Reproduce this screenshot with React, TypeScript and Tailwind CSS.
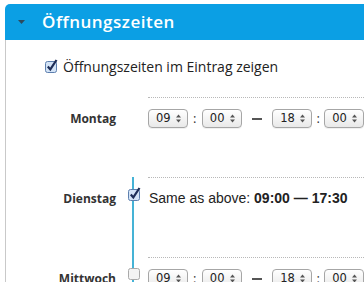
import React from 'react';

const Caret = () => (
  <svg width="7" height="4" viewBox="0 0 7 4" className="block">
    <path d="M0 0h7L3.5 4z" fill="#2c4a5e" />
  </svg>
);

const Arrows = () => (
  <svg width="5" height="9" viewBox="0 0 5 9" className="block">
    <path d="M0 3.5L2.5 0.5L5 3.5z" fill="#555" />
    <path d="M0 5.5L2.5 8.5L5 5.5z" fill="#555" />
  </svg>
);

const Box: React.FC<{ checked?: boolean }> = ({ checked }) => (
  <svg width="13" height="13" viewBox="0 0 13 13" className="block overflow-visible">
    <rect
      x="0.5"
      y="1.5"
      width="11"
      height="11"
      rx="2"
      fill={checked ? '#d3e3f6' : '#f3f3f3'}
      stroke={checked ? '#5d7fae' : '#a9a9a9'}
    />
    {checked && (
      <path d="M2.8 6.6L5.3 9.4L11.5 0" fill="none" stroke="#1d2d57" strokeWidth="2.2" />
    )}
  </svg>
);

const Select: React.FC<{ value: string }> = ({ value }) => (
  <div className="flex h-[19px] w-[43px] items-center justify-between rounded-[4px] border border-[#a6a6a6] bg-linear-to-b from-white to-[#e9e9e9] pl-[7px] pr-[6px] font-['DejaVu_Sans',sans-serif] text-[11.5px] text-[#222] shadow-[0_1px_0_rgba(0,0,0,0.06)]">
    <span>{value}</span>
    <Arrows />
  </div>
);

const Times: React.FC<{ from: string; to: string }> = ({ from, to }) => (
  <div className="flex items-center whitespace-nowrap">
    <Select value={from} />
    <span className="w-4 text-center text-[13px] leading-none text-[#333]">:</span>
    <Select value="00" />
    <span className="mx-[10px] inline-block h-[2px] w-3 bg-[#555]" />
    <Select value={to} />
    <span className="w-[14px] text-center text-[13px] leading-none text-[#333]">:</span>
    <Select value="00" />
  </div>
);

const Day: React.FC<{
  label: string;
  box?: 'on' | 'off';
  children: React.ReactNode;
}> = ({ label, box, children }) => (
  <div className="flex h-20">
    <div className="w-[110px] pt-[12px] text-right text-[12px] leading-[19px] font-bold text-[#333]">
      {label}
    </div>
    <div className="relative w-[32px]">
      {box && (
        <>
          <div className="absolute inset-y-0 left-[16px] w-[2px] bg-[#45b3d6]" />
          <div className={box === 'on' ? 'relative ml-[12px] mt-[11px]' : 'relative ml-[12px] mt-[10px]'}>
            <Box checked={box === 'on'} />
          </div>
        </>
      )}
    </div>
    <div className="flex-1 overflow-hidden border-t border-dotted border-[#b8b8b8] pt-[11px]">{children}</div>
  </div>
);

export default function App() {
  return (
    <div className="h-[282px] overflow-hidden bg-white pl-[5px] pt-[4px] font-['Open_Sans',sans-serif]">
      <div className="flex h-9 items-center rounded-tl-[5px] bg-[#0b9fe4]">
        <div className="ml-[13px]">
          <Caret />
        </div>
        <h2 className="ml-[17px] text-[17px] font-semibold tracking-[0.5px] text-white">Öffnungszeiten</h2>
      </div>
      <div className="h-full border-l border-[#c9c9c9]">
        <label className="flex items-center pl-[39px] pt-[16px] text-[14px] text-[#222]">
          <Box checked />
          <span className="ml-[5px]">Öffnungszeiten im Eintrag zeigen</span>
        </label>
        <div className="mt-[20px]">
          <Day label="Montag">
            <Times from="09" to="18" />
          </Day>
          <Day label="Dienstag" box="on">
            <p className="pl-[1px] pt-0 font-['Liberation_Sans',sans-serif] text-[14px] leading-[18px] whitespace-nowrap text-[#222]">
              Same as above: <b>09:00 — 17:30</b>
            </p>
          </Day>
          <Day label="Mittwoch" box="off">
            <Times from="09" to="18" />
          </Day>
        </div>
      </div>
    </div>
  );
}
